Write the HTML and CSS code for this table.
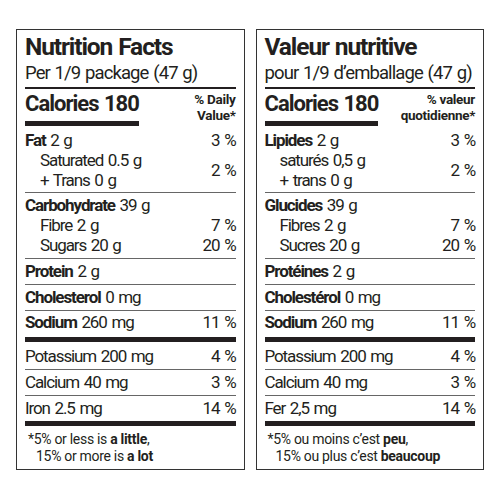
FILE: index.html
```html
<!DOCTYPE html>
<html lang="en">
<head>
  <meta charset="UTF-8" />
  <meta name="viewport" content="width=device-width, initial-scale=1.0"/>
  <title>Nutrition Facts</title>
  <link rel="stylesheet" href="styles.css">
</head>
<body>

<div class="labels">
  <section class="facts">
    <h1 class="title">Nutrition Facts</h1>
    <div class="serving">Per 1/9 package (47 g)</div>
    <div class="cal-row">
      <div class="calories">Calories 180</div>
      <div class="dv">% Daily<br>Value*</div>
    </div>

    <div class="group first">
      <div class="row"><span><b>Fat</b> 2 g</span><span>3 %</span></div>
      <div class="row pair">
        <div class="sub"><div>Saturated 0.5 g</div><div>+ Trans 0 g</div></div>
        <span>2 %</span>
      </div>
    </div>
    <div class="group">
      <div class="row"><span><b>Carbohydrate</b> 39 g</span></div>
      <div class="row sub"><span>Fibre 2 g</span><span>7 %</span></div>
      <div class="row sub"><span>Sugars 20 g</span><span>20 %</span></div>
    </div>
    <div class="group">
      <div class="row"><span><b>Protein</b> 2 g</span></div>
    </div>
    <div class="group">
      <div class="row"><span><b>Cholesterol</b> 0 mg</span></div>
    </div>
    <div class="group sodium">
      <div class="row"><span><b>Sodium</b> 260 mg</span><span>11 %</span></div>
    </div>
    <div class="group after-bar">
      <div class="row"><span>Potassium 200 mg</span><span>4 %</span></div>
    </div>
    <div class="group">
      <div class="row"><span>Calcium 40 mg</span><span>3 %</span></div>
    </div>
    <div class="group last">
      <div class="row"><span>Iron 2.5 mg</span><span>14 %</span></div>
    </div>

    <p class="note">*5% or less is <b>a little</b>,<br>15% or more is <b>a lot</b></p>
  </section>

  <section class="facts" lang="fr">
    <h1 class="title">Valeur nutritive</h1>
    <div class="serving">pour 1/9 d’emballage (47 g)</div>
    <div class="cal-row">
      <div class="calories">Calories 180</div>
      <div class="dv">% valeur<br>quotidienne*</div>
    </div>

    <div class="group first">
      <div class="row"><span><b>Lipides</b> 2 g</span><span>3 %</span></div>
      <div class="row pair">
        <div class="sub"><div>saturés 0,5 g</div><div>+ trans 0 g</div></div>
        <span>2 %</span>
      </div>
    </div>
    <div class="group">
      <div class="row"><span><b>Glucides</b> 39 g</span></div>
      <div class="row sub"><span>Fibres 2 g</span><span>7 %</span></div>
      <div class="row sub"><span>Sucres 20 g</span><span>20 %</span></div>
    </div>
    <div class="group">
      <div class="row"><span><b>Protéines</b> 2 g</span></div>
    </div>
    <div class="group">
      <div class="row"><span><b>Cholestérol</b> 0 mg</span></div>
    </div>
    <div class="group sodium">
      <div class="row"><span><b>Sodium</b> 260 mg</span><span>11 %</span></div>
    </div>
    <div class="group after-bar">
      <div class="row"><span>Potassium 200 mg</span><span>4 %</span></div>
    </div>
    <div class="group">
      <div class="row"><span>Calcium 40 mg</span><span>3 %</span></div>
    </div>
    <div class="group last">
      <div class="row"><span>Fer 2,5 mg</span><span>14 %</span></div>
    </div>

    <p class="note">*5% ou moins c’est <b>peu</b>,<br>15% ou plus c’est <b>beaucoup</b></p>
  </section>
</div>

</body>
</html>
```

FILE: styles.css
```css
* {
  box-sizing: border-box;
}

body {
  margin: 0;
  background: #fff;
  color: #231f20;
  font-family: Roboto, "Liberation Sans", sans-serif;
}

.labels {
  display: flex;
  gap: 11px;
  padding: 29px 16px 0;
}

.facts {
  flex: 1;
  border: 1px solid #333;
  padding: 3px 8px 4px;
}

.title {
  margin: 0;
  font-size: 24.5px;
  font-weight: bold;
  line-height: 28px;
  letter-spacing: -1.1px;
  word-spacing: 1px;
}

.serving {
  font-size: 18.5px;
  line-height: 22px;
  letter-spacing: -0.9px;
  word-spacing: 1px;
  padding: 1px 0 3px;
  border-bottom: 2px solid #231f20;
}

.cal-row {
  display: flex;
  justify-content: space-between;
  align-items: flex-start;
}

.calories {
  font-size: 22px;
  font-weight: bold;
  line-height: 26px;
  letter-spacing: -1px;
  word-spacing: 1px;
  padding: 2px 0 4px;
  border-bottom: 5px solid #231f20;
}

.dv {
  font-size: 13.5px;
  font-weight: bold;
  line-height: 16px;
  letter-spacing: -0.3px;
  text-align: right;
  padding-top: 1.5px;
}

.group {
  border-top: 1px solid #666;
  padding: 2px 0 3px;
  font-size: 17px;
  line-height: 20px;
  letter-spacing: -1.1px;
  word-spacing: 1.5px;
}

.group.first {
  border-top: none;
  padding: 3.5px 0 2.5px;
}

.group.sodium {
  padding: 1px 0 5px;
  border-bottom: 5px solid #231f20;
}

.group.after-bar {
  border-top: none;
  padding-top: 4px;
}

.group.last {
  border-bottom: 5px solid #231f20;
}

.row {
  display: flex;
  justify-content: space-between;
}

.pair {
  align-items: center;
}

.sub {
  padding-left: 15px;
}

.note {
  margin: 4.5px 0 0;
  padding-left: 11px;
  text-indent: -8px;
  font-size: 14px;
  line-height: 17px;
  letter-spacing: -0.3px;
}
```
